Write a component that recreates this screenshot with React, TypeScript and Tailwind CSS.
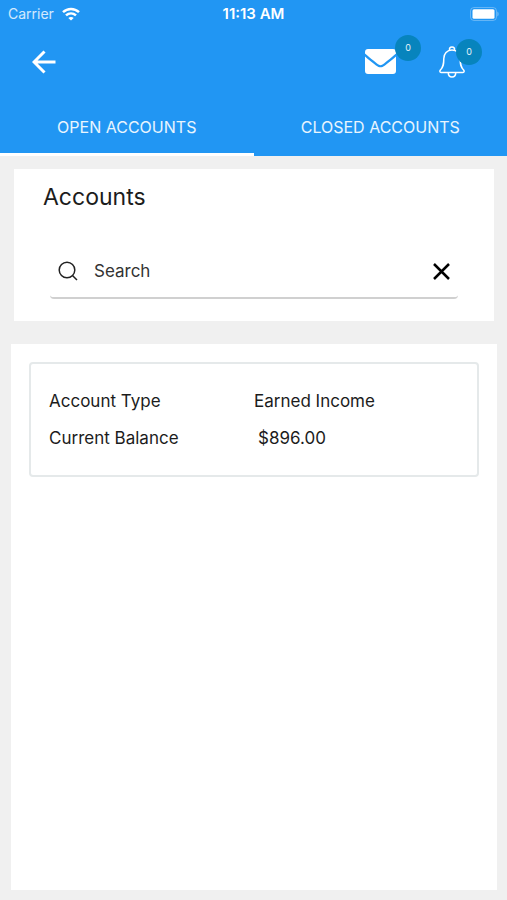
import { useState } from "react";

const accounts = [{ id: 1, type: "Earned Income", balance: "$896.00" }];

function StatusBar() {
  return (
    <div className="grid h-7 grid-cols-3 items-center px-2 text-sm">
      <div className="flex items-center gap-2">
        <span className="text-white/80">Carrier</span>
        <svg className="h-[14px] w-[18px]" viewBox="0 0 18 14" fill="none" stroke="white" strokeWidth="2.5">
          <path d="M1 5.2C5.6 0.9 12.4 0.9 17 5.2" />
          <path d="M4 8.4C6.9 5.7 11.1 5.7 14 8.4" />
          <path d="M9 13.6L6.3 10.9C7.8 9.6 10.2 9.6 11.7 10.9Z" fill="white" stroke="none" />
        </svg>
      </div>
      <span className="text-center text-[15px] font-semibold">11:13 AM</span>
      <svg className="h-[14px] w-[30px] justify-self-end" viewBox="0 0 30 14">
        <rect x="1.5" y="0.5" width="26" height="13" rx="3.5" fill="none" stroke="white" strokeOpacity="0.3" />
        <rect x="3.5" y="2.2" width="22" height="9.6" rx="1.5" fill="white" />
        <path d="M28.4 4.5C30 5.2 30 8.8 28.4 9.5Z" fill="white" fillOpacity="0.4" />
      </svg>
    </div>
  );
}

function Badge({ count, className }: { count: number; className: string }) {
  return (
    <span
      className={`absolute flex h-[26px] w-[26px] items-center justify-center rounded-full bg-[#0784bd] text-[9px] text-white/90 ${className}`}
    >
      {count}
    </span>
  );
}

function Toolbar() {
  return (
    <div className="flex h-[70px] items-center justify-between pb-[3px] pl-8 pr-[42px]">
      <button type="button" aria-label="Back">
        <svg className="h-6 w-6" viewBox="0 0 24 24" fill="none" stroke="white" strokeWidth="3">
          <path d="M12.5 1.5L2 12L12.5 22.5M2 12H23.5" />
        </svg>
      </button>
      <div className="flex items-center gap-[43px]">
        <button type="button" aria-label="Messages" className="relative">
          <svg className="h-[25px] w-[31px]" viewBox="0 0 31 25" fill="white">
            <path d="M3 0H28C29.8 0 31 1.2 31 3V4.6C28 7.2 22.5 11.8 19 14.6C17.3 15.9 16.5 16.3 15.5 16.3C14.5 16.3 13.7 15.9 12 14.6C8.5 11.8 3 7.2 0 4.6V3C0 1.2 1.2 0 3 0Z" />
            <path d="M0 7.4C3 10 7.5 13.8 11 16.4C12.8 17.7 14.2 18.3 15.5 18.3C16.8 18.3 18.2 17.7 20 16.4C23.5 13.8 28 10 31 7.4V22C31 23.8 29.8 25 28 25H3C1.2 25 0 23.8 0 22Z" />
          </svg>
          <Badge count={0} className="-right-[25px] -top-[14px]" />
        </button>
        <button type="button" aria-label="Notifications" className="relative">
          <svg className="h-8 w-[26px]" viewBox="0 0 26 32" fill="none" stroke="white" strokeWidth="1.5" strokeLinejoin="round">
            <path d="M10.8 4.3C9.8 2.5 11 1 13 1C15 1 16.2 2.5 15.2 4.3" />
            <path d="M13 4C8 4 4.800 7.800 4.800 12.500C4.800 18.500 4.400 21 1.400 24C0.500 25 0.800 26.500 2 26.500H24C25.200 26.500 25.500 25 24.600 24C21.600 21 21.200 18.500 21.200 12.500C21.200 7.800 18 4 13 4Z" />
            <path d="M9.3 26.8C9.3 29.3 10.8 31 13 31C15.2 31 16.7 29.3 16.7 26.8" />
          </svg>
          <Badge count={0} className="-right-[17px] -top-[7px]" />
        </button>
      </div>
    </div>
  );
}

function App() {
  const [tab, setTab] = useState("open");
  const [search, setSearch] = useState("");

  const tabClass = "h-[58px] border-b-[3px] pt-[2px] text-base text-white/90";

  return (
    <div className="flex min-h-screen flex-col bg-[#f0f0f0] font-['Inter',sans-serif] text-[#1c1c1c]">
      <header className="bg-[#2196f3] text-white">
        <StatusBar />
        <Toolbar />
        <nav className="grid grid-cols-2">
          <button
            type="button"
            onClick={() => setTab("open")}
            className={`${tabClass} ${tab === "open" ? "border-white" : "border-transparent"}`}
          >
            OPEN ACCOUNTS
          </button>
          <button
            type="button"
            onClick={() => setTab("closed")}
            className={`${tabClass} ${tab === "closed" ? "border-white" : "border-transparent"}`}
          >
            CLOSED ACCOUNTS
          </button>
        </nav>
      </header>

      <main className="flex flex-1 flex-col pb-[10px] pl-[11px] pr-[10px] pt-[13px]">
        <section className="mx-[3px] bg-white px-[29px] pb-[22px] pt-3">
          <h1 className="text-[23px] leading-8">Accounts</h1>
          <div className="mx-[7px] mt-8 flex h-[54px] items-center rounded-sm border-b-2 border-[#d0d0d0] px-2">
            <svg className="h-5 w-5 shrink-0" viewBox="0 0 20 20" fill="none" stroke="#222" strokeWidth="1.5">
              <circle cx="9" cy="9" r="7.8" />
              <path d="M14.5 14.5L19 19" />
            </svg>
            <input
              type="text"
              aria-label="Search"
              placeholder="Search"
              value={search}
              onChange={(e) => setSearch(e.target.value)}
              className="ml-4 h-7 min-w-0 flex-1 text-[17px] outline-none placeholder:text-[#333]"
            />
            <button type="button" aria-label="Clear" onClick={() => setSearch("")}>
              <svg className="h-[17px] w-[17px]" viewBox="0 0 17 17" stroke="black" strokeWidth="2.5">
                <path d="M1 1L16 16M16 1L1 16" />
              </svg>
            </button>
          </div>
        </section>

        <section className="mt-[23px] flex-1 bg-white p-[18px]">
          {accounts.map((account) => (
            <dl
              key={account.id}
              className="grid grid-cols-2 gap-y-[13px] rounded-sm border-2 border-[#e5e9ea] px-[18px] py-[25px] text-[17px] leading-6"
            >
              <dt>Account Type</dt>
              <dd>{account.type}</dd>
              <dt>Current Balance</dt>
              <dd className="pl-1">{account.balance}</dd>
            </dl>
          ))}
        </section>
      </main>
    </div>
  );
}

export default App;
